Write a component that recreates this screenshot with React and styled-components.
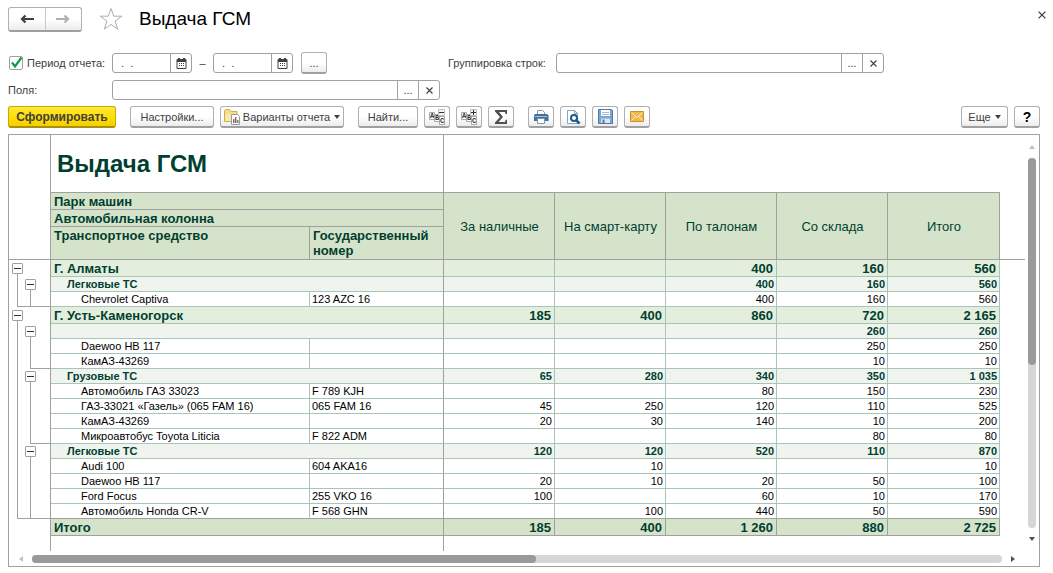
import React from "react";
import styled, { createGlobalStyle, css } from "styled-components";

const C = {
  line: "#a0a0a0",
  grid: "#a9c4b9",
  ink: "#003f2f",
  head: "#d6e3cb",
  level1: "#e3eedd",
  level2: "#f0f4ef",
  text: "#404040",
};

const Global = createGlobalStyle`
  *, *::before, *::after { box-sizing: border-box; }
  html, body, #root { height: 100%; }
  body { margin: 0; background: #fff; color: ${C.text}; font: 11px/16px "Liberation Sans", Arial, sans-serif; }
  button, input { font: inherit; color: inherit; margin: 0; padding: 0; }
  svg { flex: none; }
`;

const Page = styled.div`
  height: 100%;
  display: flex;
  flex-direction: column;
  padding: 6px 13px 6px 8px;
`;

const TitleBar = styled.header`
  display: flex;
  align-items: center;
  height: 26px;
  margin-right: -10px;
`;

const raised = css`
  border: 1px solid #b0b0b0;
  border-bottom: 2px solid #a0a0a0;
  border-radius: 3px;
  background: linear-gradient(#fff 50%, #ececec);
`;

const NavGroup = styled.nav`
  ${raised}
  display: flex;
  width: 74px;
  height: 25px;
`;

const NavButton = styled.button`
  flex: 1;
  display: flex;
  align-items: center;
  justify-content: center;
  border: 0;
  background: none;
  & + & { border-left: 1px solid #c8c8c8; }
`;

const PlainButton = styled.button`
  display: flex;
  align-items: center;
  justify-content: center;
  border: 0;
  background: none;
`;

const Star = styled(PlainButton)`
  width: 26px;
  height: 26px;
  margin-left: 16px;
`;

const Close = styled(PlainButton)`
  width: 16px;
  height: 16px;
  margin: 0 0 8px auto;
`;

const PageTitle = styled.h1`
  margin: 0 0 0 15px;
  font-size: 19px;
  line-height: 26px;
  font-weight: 400;
  color: #000;
`;

const FormRow = styled.div`
  display: flex;
  align-items: center;
  height: 20px;
  margin-top: ${(p) => p.$top}px;
`;

const Lead = styled.div`
  flex: none;
  display: flex;
  align-items: center;
  width: 104px;
  white-space: nowrap;
`;

const Check = styled.input`
  appearance: none;
  width: 14px;
  height: 14px;
  margin: 0 4px 0 1px;
  border: 1px solid #a0a0a0;
  border-radius: 2px;
  background: #fff;
`;

const CheckWrap = styled.span`
  display: grid;
  & > * { grid-area: 1 / 1; }
  svg { pointer-events: none; }
`;

const Field = styled.div`
  flex: 0 1 auto;
  width: ${(p) => p.$w}px;
  min-width: 0;
  display: flex;
  height: 20px;
  border: 1px solid #a0a0a0;
  border-radius: 3px;
  background: #fff;
`;

const TextBox = styled.input`
  flex: 1;
  width: 0;
  min-width: 0;
  border: 0;
  padding-left: 8px;
  background: none;
  outline: none;
`;

const FieldButton = styled.button`
  flex: none;
  width: 21px;
  display: flex;
  align-items: center;
  justify-content: center;
  border: 0;
  border-left: 1px solid #a0a0a0;
  background: none;
`;

const Dash = styled.span`
  width: 21px;
  text-align: center;
`;

const GroupLabel = styled.label`
  flex: none;
  width: 108px;
  margin-left: 121px;
  white-space: nowrap;
`;

const ToolBar = styled.div`
  display: flex;
  align-items: center;
  gap: 14px;
  margin-top: 6px;
`;

const Tools = styled.div`
  display: flex;
  gap: 6px;
  margin-left: ${(p) => (p.$end ? "auto" : 0)};
`;

const Button = styled.button`
  ${raised}
  flex: none;
  display: flex;
  align-items: center;
  justify-content: center;
  gap: 2px;
  width: ${(p) => p.$w || 26}px;
  height: 22px;
  white-space: nowrap;
  ${(p) =>
    p.$primary &&
    css`
      border-color: #c9a800;
      border-bottom-color: #a98f10;
      background: linear-gradient(#ffe83a, #ffdc00 60%, #f5cf00);
      font-size: 12px;
      font-weight: 700;
    `}
  ${(p) =>
    p.$help &&
    css`
      font-size: 14px;
      font-weight: 700;
      color: #000;
    `}
`;

const PeriodButton = styled(Button)`
  margin-left: 8px;
`;

const Caret = styled.span`
  margin-left: 2px;
  border: 3px solid transparent;
  border-top: 4px solid #404040;
  border-bottom: 0;
`;

const Report = styled.section`
  flex: 1;
  min-height: 0;
  margin-top: 6px;
  display: grid;
  grid-template: 1fr 15px / 1fr 14px;
  border: 1px solid ${C.line};
`;

const Viewport = styled.div`
  overflow: hidden;
  display: flex;
`;

const Sheet = styled.table`
  width: 100%;
  height: 100%;
  table-layout: fixed;
  border-collapse: separate;
  border-spacing: 0;
  color: ${C.ink};
  font-size: 13px;
  line-height: 15px;
`;

const Cell = styled.td`
  padding: 0 2px 0 3px;
  overflow: hidden;
  white-space: nowrap;
  text-align: left;
  vertical-align: top;
  font-weight: ${(p) => (p.$bold ? 700 : 400)};
  border: 0 solid ${C.line};
  border-bottom-width: ${(p) => (p.$foot ? 1 : 0)}px;
  border-right-width: ${(p) => (p.$side ? 1 : 0)}px;
`;

const HeadCell = styled(Cell)`
  padding-top: 1px;
  background: ${C.head};
  border-width: 0 1px 1px 0;
  white-space: normal;
`;

const ColumnHead = styled(HeadCell)`
  text-align: center;
  vertical-align: middle;
`;

const ReportTitle = styled(Cell)`
  padding-left: 6px;
  vertical-align: middle;
  font-size: 24px;
  line-height: 28px;
`;

const Row = styled.tr`
  height: ${(p) => p.$h}px;
`;

const look = {
  1: css`background: ${C.level1}; font-weight: 700; padding: 1px 3px 0;`,
  2: css`background: ${C.level2}; font-weight: 700; padding-left: 16px; font-size: 11px; line-height: 14px;`,
  3: css`color: #000; padding-left: 30px; font-size: 11px; line-height: 14px;`,
  total: css`background: ${C.head}; font-weight: 700; padding: 1px 3px 0;`,
};

const DataCell = styled(Cell)`
  ${(p) => look[p.$level]}
  border-color: ${(p) => (p.$last || p.$level === "total" ? C.line : C.grid)};
  border-width: 0 1px 1px 0;
  ${(p) => p.$level !== "total" && !p.$frozen && css`border-right-color: ${C.grid};`}
  ${(p) => p.$frozen && css`border-right-color: ${C.line};`}
  ${(p) => p.$plate && css`padding-left: 2px;`}
  ${(p) => p.$num && css`text-align: right; padding-left: 0;`}
`;

const Gutter = styled(Cell)`
  padding: 0;
  border-right-width: 1px;
`;

const Tree = styled.div`
  display: flex;
  height: ${(p) => p.$h}px;
  padding-left: 2px;
`;

const rule = `linear-gradient(${C.line}, ${C.line})`;
const Rail = styled.span`
  display: flex;
  align-items: center;
  justify-content: center;
  flex: ${(p) => (p.$rest ? "1" : "0 0 13px")};
  background-repeat: no-repeat;
  background-image: ${rule}, ${rule};
  background-position: 6px 100%, 100% 100%;
  background-size:
    ${(p) => ({ full: "1px 100%", open: "1px 50%" })[p.$line] || "0 0"},
    ${(p) => ({ all: "100% 1px", half: "7px 1px" })[p.$foot] || "0 0"};
`;

const Toggle = styled.button`
  width: 11px;
  height: 11px;
  display: flex;
  align-items: center;
  justify-content: center;
  border: 1px solid #a0a0a0;
  border-radius: 1px;
  background: #fff;
  &::before { content: ""; width: 7px; height: 1px; background: #303030; }
`;

const Scroll = styled.div`
  display: flex;
  align-items: center;
  flex-direction: ${(p) => (p.$v ? "column" : "row")};
  padding: ${(p) => (p.$v ? "9px 0" : "0 9px")};
`;

const Track = styled.div`
  flex: 1;
  border-radius: 4px;
  background: #d6d6d6;
  ${(p) => (p.$v ? "width: 8px; margin: 8px 0;" : "height: 8px; margin: 0 8px;")}
`;

const Thumb = styled.div`
  border-radius: 4px;
  background: #9a9a9a;
  ${(p) => (p.$v ? "height: 56%; width: 8px;" : "width: 52%; height: 8px;")}
`;

const Arrow = ({ d, dim }) => (
  <svg width="6" height="6" viewBox="0 0 6 6"><path d={d} fill={dim ? "#c0c0c0" : "#505050"} /></svg>
);

const Cross = ({ s = 7 }) => (
  <svg width={s} height={s} viewBox="0 0 8 8"><path d="M.6.6 7.4 7.4M7.4.6.6 7.4" stroke="#404040" strokeWidth="1.300" /></svg>
);

const Calendar = () => (
  <svg width="11" height="11" viewBox="0 0 11 11">
    <path d="M1 1.500h9v9H1z" fill="#fff" stroke="#404040" />
    <path d="M1 1h9v3H1zM2 0h2v2H2zM7 0h2v2H7z" fill="#404040" />
    <path d="M3 5h1v1H3zM5 5h1v1H5zM7 5h1v1H7zM3 7h1v1H3zM5 7h1v1H5zM7 7h1v1H7z" fill="#404040" />
  </svg>
);

const NavArrow = ({ back }) => (
  <svg width="14" height="10" viewBox="0 0 14 10">
    {back ? (
      <path d="M14 5H3M5.500 1.500 2 5l3.500 3.500" fill="none" stroke="#404040" strokeWidth="2.200" />
    ) : (
      <path d="M0 5H11M8.500 1.500 12 5 8.500 8.500" fill="none" stroke="#b0b0b0" strokeWidth="2.200" />
    )}
  </svg>
);

const StarIcon = () => (
  <svg width="24" height="24" viewBox="0 0 24 24">
    <path d="M12 1.500l2.700 7.700H22.700l-6.500 4.900 2.400 8L12 17.400l-6.600 4.700 2.400-8-6.500-4.900H9.300z" fill="#fff" stroke="#a6adb8" />
  </svg>
);

const Folder = () => (
  <svg width="17" height="16" viewBox="0 0 17 16">
    <path d="M.5 12.500v-11l1-1h4l1.500 2h6v10z" fill="#f5dc85" stroke="#d0ad50" />
    <path d="M1.500 12V5h11v7z" fill="#fbe9a6" />
    <path d="M7.500 5.500h6l2 2v8h-8z" fill="#fff" stroke="#8b9db4" />
    <path d="M9 10h1.500v4H9z" fill="#4778ae" /><path d="M11 8h1.500v6H11z" fill="#d95245" /><path d="M13 11h1.500v3H13z" fill="#55a055" />
  </svg>
);

const Card = styled.text`
  font: 700 7px "Liberation Mono", monospace;
  fill: #303030;
  text-anchor: middle;
`;

const Sheets = ({ plus }) => (
  <svg width="18" height="16" viewBox="0 0 18 16" aria-hidden="true">
    <path d="M1.500 3.500h5v7h-5z" fill="#fff" stroke="#a8a8a8" />
    <Card x="4" y="9">A</Card>
    <path d="M6.500 5.500h5v7h-5z" fill="#fff" stroke="#a8a8a8" />
    <Card x="9" y="11">B</Card>
    <path d="M11.500 7.500h5v8h-5z" fill="#fff" stroke="#a8a8a8" />
    <Card x="14" y="14">C</Card>
    <path d="M10.500.5h6v6h-6z" fill="#f4f4f4" stroke="#c0c0c0" />
    <path d={plus ? "M11 3.500h5M13.500 1v5" : "M11 3.500h5"} stroke="#303030" />
  </svg>
);

const Sigma = () => (
  <svg width="14" height="14" viewBox="0 0 14 14">
    <path d="M1 0h12v4h-1.500L11 2H5l4 5-4.500 5H11l.7-2.200H13V14H1v-1.500L6 7 1 1.500z" fill="#505050" />
  </svg>
);

const Printer = () => (
  <svg width="16" height="14" viewBox="0 0 16 14">
    <path d="M4.500 5V.5h5l2 2V5" fill="#fff" stroke="#7b98b5" />
    <path d="M2 4h12l1.500 1.500V11H1V5.500z" fill="#3f719f" />
    <path d="M2 6h12v1H2z" fill="#a9c6df" />
    <path d="M4.500 8.500h7v5h-7z" fill="#fff" stroke="#7b98b5" />
  </svg>
);

const Preview = () => (
  <svg width="16" height="16" viewBox="0 0 16 16">
    <path d="M2.500 1.500h7l3 3v10h-10z" fill="#fff" stroke="#8ba4bd" />
    <path d="M9.500 1.500v3h3" fill="none" stroke="#8ba4bd" />
    <circle cx="9" cy="9" r="3" fill="#fff" stroke="#1d5b8c" strokeWidth="2" />
    <path d="M11.300 11.300 14.500 14.500" stroke="#1d5b8c" strokeWidth="2.600" />
  </svg>
);

const Floppy = () => (
  <svg width="15" height="15" viewBox="0 0 15 15">
    <path d="M.5.5h13l1 1v13H.5z" fill="#7ba5d2" stroke="#4b78aa" />
    <path d="M3 1h9v6H3z" fill="#fff" /><path d="M4 3h7v1H4zM4 5h7v1H4z" fill="#a8bdd2" />
    <path d="M3 9.500h9V14H3z" fill="#dce6ef" /><path d="M4.500 10.500h2V14h-2z" fill="#4b78aa" />
  </svg>
);

const Mail = () => (
  <svg width="14" height="11" viewBox="0 0 14 11">
    <path d="M.5.5h13v10H.5z" fill="#f0b850" stroke="#cf8f2a" />
    <path d="M1.500 1.500 7 6.500l5.500-5M1.500 9.500l4-4M12.500 9.500l-4-4" fill="none" stroke="#fdeec4" />
  </svg>
);

const columns = ["За наличные", "На смарт-карту", "По талонам", "Со склада", "Итого"];

/* level, name, plate number, values, [outer rail, inner rail, closing rule] */
const rows = [
  [1, "Г. Алматы", "", ["", "", "400", "160", "560"], ["toggle", ""]],
  [2, "Легковые ТС", "", ["", "", "400", "160", "560"], ["full", "toggle"]],
  [3, "Chevrolet Captiva", "123 AZC 16", ["", "", "400", "160", "560"], ["full", "full", "outer"]],
  [1, "Г. Усть-Каменогорск", "", ["185", "400", "860", "720", "2 165"], ["toggle", ""]],
  [2, "", "", ["", "", "", "260", "260"], ["full", "toggle"]],
  [3, "Daewoo HB 117", "", ["", "", "", "250", "250"], ["full", "full"]],
  [3, "КамАЗ-43269", "", ["", "", "", "10", "10"], ["full", "full", "inner"]],
  [2, "Грузовые ТС", "", ["65", "280", "340", "350", "1 035"], ["full", "toggle"]],
  [3, "Автомобиль ГАЗ 33023", "F 789 KJH", ["", "", "80", "150", "230"], ["full", "full"]],
  [3, "ГАЗ-33021 «Газель» (065 FAM 16)", "065 FAM 16", ["45", "250", "120", "110", "525"], ["full", "full"]],
  [3, "КамАЗ-43269", "", ["20", "30", "140", "10", "200"], ["full", "full"]],
  [3, "Микроавтобус Toyota Liticia", "F 822 ADM", ["", "", "", "80", "80"], ["full", "full", "inner"]],
  [2, "Легковые ТС", "", ["120", "120", "520", "110", "870"], ["full", "toggle"]],
  [3, "Audi 100", "604 AKA16", ["", "10", "", "", "10"], ["full", "full"]],
  [3, "Daewoo HB 117", "", ["20", "10", "20", "50", "100"], ["full", "full"]],
  [3, "Ford Focus", "255 VKO 16", ["100", "", "60", "10", "170"], ["full", "full"]],
  [3, "Автомобиль Honda CR-V", "F 568 GHN", ["", "100", "440", "50", "590"], ["full", "full", "outer"]],
  ["total", "Итого", "", ["185", "400", "1 260", "880", "2 725"], ["", ""]],
];

function TreeRail({ state, foot }) {
  const open = state === "toggle";
  return (
    <Rail $line={open ? "open" : state} $foot={foot}>
      {open && <Toggle type="button" aria-label="Свернуть" />}
    </Rail>
  );
}

function DataRow({ row, last }) {
  const [level, name, plate, values, [outer, inner, foot]] = row;
  const h = level === 1 || level === "total" ? 17 : 15;
  return (
    <Row $h={h}>
      <Gutter>
        <Tree $h={h}>
          <TreeRail state={outer} foot={foot === "outer" ? "half" : ""} />
          <TreeRail state={inner} foot={foot === "outer" ? "all" : foot ? "half" : ""} />
          <Rail $rest $foot={foot ? "all" : ""} />
        </Tree>
      </Gutter>
      {level === 3 ? (
        <>
          <DataCell $level={3} $last={last}>{name}</DataCell>
          <DataCell $level={3} $last={last} $frozen $plate>{plate}</DataCell>
        </>
      ) : (
        <DataCell $level={level} $frozen colSpan={2}>{name}</DataCell>
      )}
      {values.map((v, i) => (
        <DataCell key={i} $level={level} $last={last} $num>{v}</DataCell>
      ))}
      <Cell />
    </Row>
  );
}

function ReportSheet() {
  return (
    <Sheet>
      <colgroup>
        <col width="42" /><col width="259" /><col width="134" />
        <col width="111" /><col width="111" /><col width="111" /><col width="111" /><col width="112" />
        <col />
      </colgroup>
      <thead>
        <Row $h={58}>
          <Gutter />
          <ReportTitle $bold $foot $side colSpan={2}>Выдача ГСМ</ReportTitle>
          <Cell $foot colSpan={5} />
          <Cell />
        </Row>
        <Row $h={17}>
          <Gutter $foot rowSpan={3} />
          <HeadCell as="th" $bold colSpan={2}>Парк машин</HeadCell>
          {columns.map((c) => (
            <ColumnHead as="th" key={c} rowSpan={3}>{c}</ColumnHead>
          ))}
          <Cell $foot rowSpan={3} />
        </Row>
        <Row $h={17}>
          <HeadCell as="th" $bold colSpan={2}>Автомобильная колонна</HeadCell>
        </Row>
        <Row $h={33}>
          <HeadCell as="th" $bold>Транспортное средство</HeadCell>
          <HeadCell as="th" $bold>Государственный номер</HeadCell>
        </Row>
      </thead>
      <tbody>
        {rows.map((r, i) => (
          <DataRow key={i} row={r} last={i === rows.length - 2} />
        ))}
        <tr>
          <Gutter />
          <Cell $side colSpan={2} />
          <Cell colSpan={6} />
        </tr>
      </tbody>
    </Sheet>
  );
}

export default function App() {
  return (
    <>
      <Global />
      <Page>
        <TitleBar>
          <NavGroup>
            <NavButton type="button" aria-label="Назад"><NavArrow back /></NavButton>
            <NavButton type="button" aria-label="Вперед"><NavArrow /></NavButton>
          </NavGroup>
          <Star type="button" aria-label="В избранное"><StarIcon /></Star>
          <PageTitle>Выдача ГСМ</PageTitle>
          <Close type="button" aria-label="Закрыть"><Cross s={8} /></Close>
        </TitleBar>

        <FormRow $top={21}>
          <Lead>
            <CheckWrap>
              <Check type="checkbox" id="period" defaultChecked />
              <svg width="16" height="14" viewBox="0 0 16 14"><path d="M4 6.500 7 10.500 13.500 1.500" fill="none" stroke="#109a4a" strokeWidth="2.200" /></svg>
            </CheckWrap>
            <label htmlFor="period">Период отчета:</label>
          </Lead>
          <Field $w={80}>
            <TextBox aria-label="Начало периода" defaultValue=".  ." />
            <FieldButton type="button" aria-label="Выбрать дату начала"><Calendar /></FieldButton>
          </Field>
          <Dash>–</Dash>
          <Field $w={80}>
            <TextBox aria-label="Конец периода" defaultValue=".  ." />
            <FieldButton type="button" aria-label="Выбрать дату конца"><Calendar /></FieldButton>
          </Field>
          <PeriodButton type="button">...</PeriodButton>
          <GroupLabel htmlFor="group">Группировка строк:</GroupLabel>
          <Field $w={328}>
            <TextBox id="group" />
            <FieldButton type="button">...</FieldButton>
            <FieldButton type="button" aria-label="Очистить"><Cross /></FieldButton>
          </Field>
        </FormRow>

        <FormRow $top={7}>
          <Lead as="label" htmlFor="fields">Поля:</Lead>
          <Field $w={328}>
            <TextBox id="fields" />
            <FieldButton type="button">...</FieldButton>
            <FieldButton type="button" aria-label="Очистить"><Cross /></FieldButton>
          </Field>
        </FormRow>

        <ToolBar>
          <Button $primary $w={108} type="button">Сформировать</Button>
          <Tools>
            <Button $w={84} type="button">Настройки...</Button>
            <Button $w={124} type="button"><Folder />Варианты отчета<Caret /></Button>
          </Tools>
          <Tools>
            <Button $w={60} type="button">Найти...</Button>
            <Button type="button" aria-label="Свернуть группы"><Sheets /></Button>
            <Button type="button" aria-label="Развернуть группы"><Sheets plus /></Button>
            <Button type="button" aria-label="Сумма"><Sigma /></Button>
          </Tools>
          <Tools>
            <Button type="button" aria-label="Печать"><Printer /></Button>
            <Button type="button" aria-label="Предварительный просмотр"><Preview /></Button>
            <Button type="button" aria-label="Сохранить"><Floppy /></Button>
            <Button type="button" aria-label="Отправить"><Mail /></Button>
          </Tools>
          <Tools $end>
            <Button $w={47} type="button">Еще<Caret /></Button>
            <Button $help type="button">?</Button>
          </Tools>
        </ToolBar>

        <Report>
          <Viewport><ReportSheet /></Viewport>
          <Scroll $v>
            <Arrow dim d="M3 1l3 4H0z" />
            <Track $v><Thumb $v /></Track>
            <Arrow d="M3 5l3-4H0z" />
          </Scroll>
          <Scroll>
            <Arrow dim d="M1 3l4-3v6z" />
            <Track><Thumb /></Track>
            <Arrow d="M5 3L1 0v6z" />
          </Scroll>
        </Report>
      </Page>
    </>
  );
}
